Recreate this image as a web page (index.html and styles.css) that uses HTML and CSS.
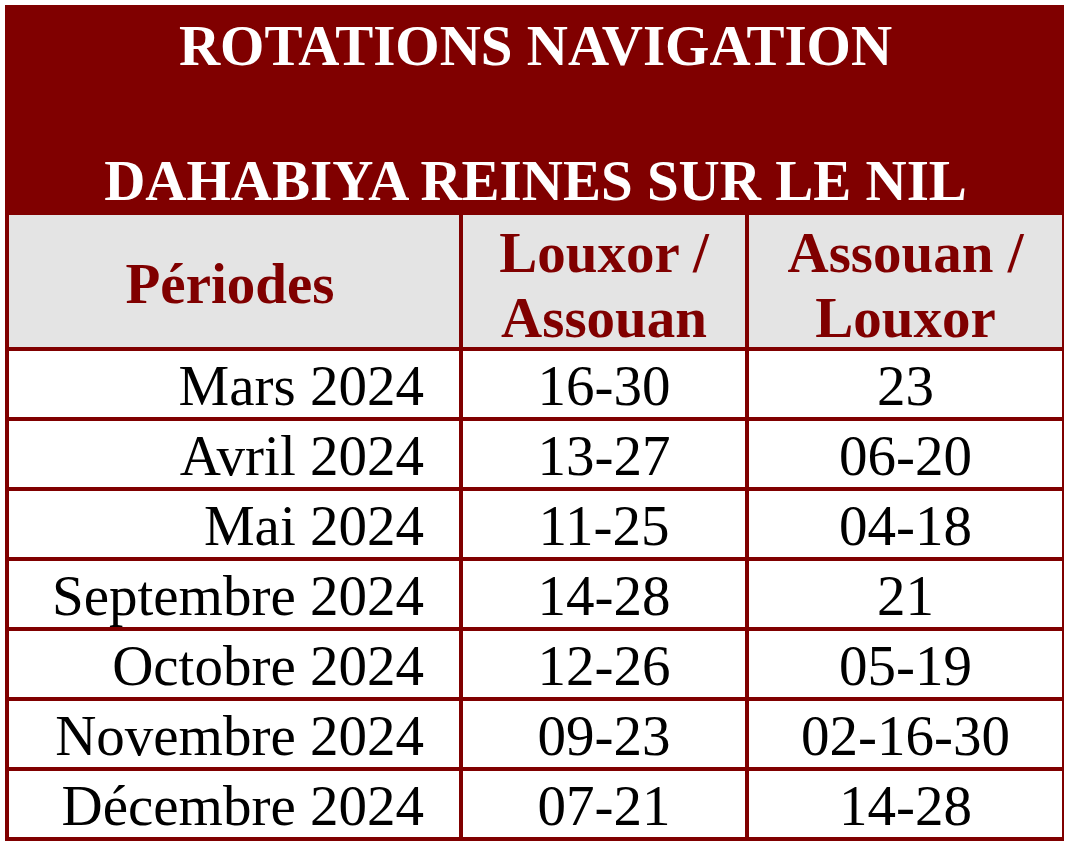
FILE: index.html
```html
<!DOCTYPE html>
<html lang="fr">
<head>
<meta charset="utf-8">
<title>Rotations navigation</title>
<link rel="stylesheet" href="styles.css">
</head>
<body>
<table class="rotations">
  <colgroup>
    <col class="c-period">
    <col class="c-lx">
    <col class="c-as">
  </colgroup>
  <thead>
    <tr>
      <th class="title" colspan="3">
        <div class="title-lines">
          <span>ROTATIONS NAVIGATION</span>
          <span>DAHABIYA REINES SUR LE NIL</span>
        </div>
      </th>
    </tr>
    <tr class="head">
      <th class="h-period">Périodes</th>
      <th class="h-route"><div class="two">Louxor /<br>Assouan</div></th>
      <th class="h-route"><div class="two">Assouan /<br>Louxor</div></th>
    </tr>
  </thead>
  <tbody>
    <tr><td class="period">Mars 2024</td><td>16-30</td><td>23</td></tr>
    <tr><td class="period">Avril 2024</td><td>13-27</td><td>06-20</td></tr>
    <tr><td class="period">Mai 2024</td><td>11-25</td><td>04-18</td></tr>
    <tr><td class="period">Septembre 2024</td><td>14-28</td><td>21</td></tr>
    <tr><td class="period">Octobre 2024</td><td>12-26</td><td>05-19</td></tr>
    <tr><td class="period">Novembre 2024</td><td>09-23</td><td>02-16-30</td></tr>
    <tr><td class="period">Décembre 2024</td><td>07-21</td><td>14-28</td></tr>
  </tbody>
</table>
</body>
</html>
```
FILE: styles.css
```css
html, body {
  background: #ffffff;
}
body {
  margin: 5px;
  font-family: "Liberation Serif", "Times New Roman", serif;
}
.rotations {
  border-collapse: collapse;
  table-layout: fixed;
  width: 1061px;
  font-size: 57px;
}
.c-period { width: 454px; }
.c-lx { width: 286px; }
.c-as { width: 317px; }

.rotations th,
.rotations td {
  border: 4px solid #800000;
  padding: 0;
}

.rotations .title {
  background: #800000;
  color: #ffffff;
  font-weight: bold;
  text-align: center;
  padding: 9px 0 2px;
}
.title-lines {
  display: flex;
  flex-direction: column;
  align-items: center;
  gap: 79px;
  line-height: 56px;
  white-space: nowrap;
}

.rotations .head th {
  background: #e4e4e4;
  color: #800000;
  font-weight: bold;
  text-align: center;
  vertical-align: top;
  line-height: 65px;
}
.rotations .head .h-period {
  padding: 36px 8px 0 0;
}
.two {
  margin: 5px 0 -3px;
}

.rotations td {
  color: #000000;
  text-align: center;
  line-height: 62px;
  padding-top: 4px;
  white-space: nowrap;
}
.rotations td.period {
  text-align: right;
  padding-right: 35px;
}
```
